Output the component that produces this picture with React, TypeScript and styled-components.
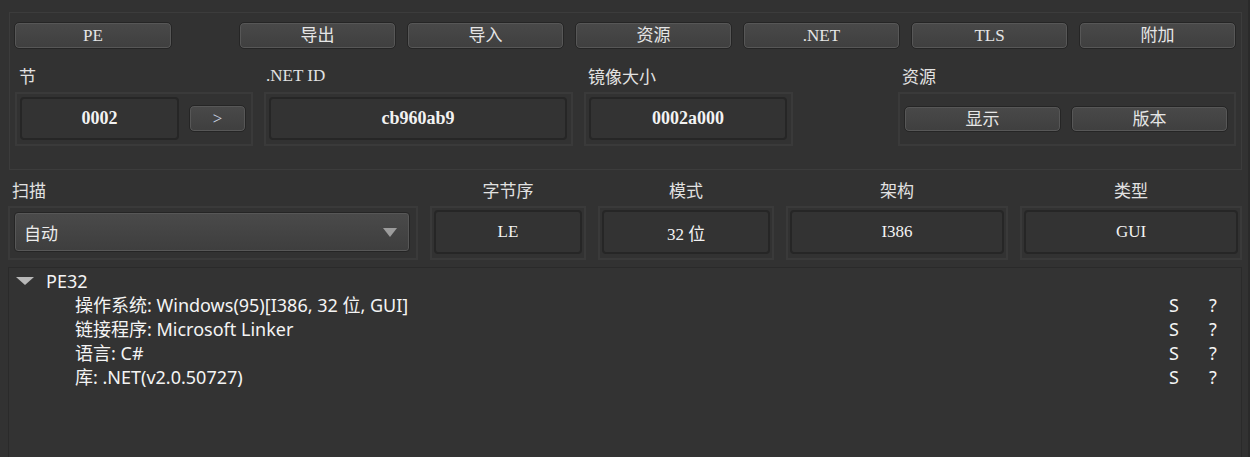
import React from 'react';
import styled, { createGlobalStyle } from 'styled-components';

const GlobalStyle = createGlobalStyle`
  html, body {
    margin: 0;
    padding: 0;
    background: #323232;
  }
  body {
    width: 1250px;
    height: 457px;
    overflow: hidden;
    font-family: "Noto Sans", "Noto Sans CJK SC", sans-serif;
    color: #ececec;
  }
`;

const serifFont = `"Liberation Serif", "Noto Sans CJK SC", serif`;

const Window = styled.div`
  height: 457px;
  box-sizing: border-box;
  padding: 12px 6px 0 8px;
  display: flex;
  flex-direction: column;
  border-right: 2px solid #2a2a2a;
`;

const GroupBox = styled.div`
  margin-left: 1px;
  border: 1px solid #3c3c3c;
  padding: 9px 5px 23px 4px;
`;

const ButtonRow = styled.div`
  display: grid;
  grid-template-columns: 158px 1fr repeat(6, 157px);
  column-gap: 11px;
`;

const Button = styled.button<{ $height?: number }>`
  height: ${({ $height }) => $height ?? 27}px;
  box-sizing: border-box;
  margin: 0;
  padding: 0;
  border: 1px solid #252525;
  border-radius: 5px;
  box-shadow: inset 0 0 0 1px #575757;
  background: linear-gradient(#494949, #3f3f3f);
  color: #e6e6e6;
  font-family: ${serifFont};
  font-size: 17px;
  line-height: 1;
  display: flex;
  align-items: center;
  justify-content: center;
`;

const FieldRow = styled.div`
  margin-top: 17px;
  padding-left: 1px;
  display: grid;
  grid-template-columns: 238px 309px 209px 1fr 338px;
  column-gap: 11px;
`;

const Field = styled.div`
  display: flex;
  flex-direction: column;
  gap: 6px;
`;

const Label = styled.label<{ $latin?: boolean; $center?: boolean }>`
  display: block;
  height: 20px;
  line-height: 20px;
  padding-left: ${({ $center, $latin }) => ($center ? 0 : $latin ? 2 : 4)}px;
  text-align: ${({ $center }) => ($center ? 'center' : 'left')};
  font-family: ${({ $latin }) => ($latin ? serifFont : `"Noto Sans CJK SC", sans-serif`)};
  font-size: 17px;
  color: #e2e2e2;
  white-space: nowrap;
`;

const Frame = styled.div<{ $pad?: string }>`
  height: 54px;
  box-sizing: border-box;
  border: 2px solid #3a3a3a;
  padding: ${({ $pad }) => $pad ?? '3px 4px 4px 3px'};
  display: flex;
  align-items: center;
  gap: 10px;
`;

const ValueBox = styled.div<{ $bold?: boolean }>`
  flex: 1;
  align-self: stretch;
  box-sizing: border-box;
  border: 2px solid #262626;
  border-radius: 4px;
  background: #333333;
  display: flex;
  align-items: center;
  justify-content: center;
  color: #f2f2f2;
  font-family: ${serifFont};
  font-weight: ${({ $bold }) => ($bold ? 700 : 400)};
  font-size: ${({ $bold }) => ($bold ? 18 : 17)}px;
`;

const ArrowButton = styled(Button)`
  width: 57px;
  flex: none;
  color: #cfd8e8;
`;

const ResourceButton = styled(Button)`
  flex: 1;
`;

const InfoRow = styled.div`
  margin-top: 10px;
  display: grid;
  grid-template-columns: 410px 156px 176px 222px 1fr;
  column-gap: 12px;
`;

const Combo = styled.div`
  flex: 1;
  align-self: stretch;
  box-sizing: border-box;
  border: 1px solid #252525;
  border-radius: 4px;
  box-shadow: inset 0 0 0 1px #575757;
  background: linear-gradient(#4a4a4a, #3e3e3e);
  display: flex;
  align-items: center;
  justify-content: space-between;
  padding: 0 12px 0 9px;
  font-family: "Noto Sans CJK SC", sans-serif;
  font-size: 17px;
  color: #ececec;
`;

const ComboArrow = styled.span`
  width: 0;
  height: 0;
  border-left: 7px solid transparent;
  border-right: 7px solid transparent;
  border-top: 9px solid #9c9c9c;
`;

const Tree = styled.div`
  flex: 1;
  margin-top: 7px;
  border: 1px solid #2a2a2a;
  border-bottom: none;
  background: #333333;
  padding-top: 1px;
`;

const TreeRow = styled.div<{ $indent: number }>`
  display: grid;
  grid-template-columns: 1fr 40px 32px;
  height: 24px;
  line-height: 24px;
  font-size: 18px;
  color: #f4f4f4;
  padding-left: ${({ $indent }) => $indent}px;
  white-space: nowrap;
`;

const TreeTitle = styled.span`
  display: flex;
  align-items: center;
`;

const Expander = styled.span`
  width: 0;
  height: 0;
  margin-right: 12px;
  border-left: 9px solid transparent;
  border-right: 9px solid transparent;
  border-top: 8px solid #b8b8b8;
`;

const Flag = styled.span``;

const topButtons = ['导出', '导入', '资源', '.NET', 'TLS', '附加'];

const details = [
  '操作系统: Windows(95)[I386, 32 位, GUI]',
  '链接程序: Microsoft Linker',
  '语言: C#',
  '库: .NET(v2.0.50727)',
];

const infoFields = [
  { label: '字节序', value: 'LE' },
  { label: '模式', value: '32 位' },
  { label: '架构', value: 'I386' },
  { label: '类型', value: 'GUI' },
];

export default function App() {
  return (
    <>
      <GlobalStyle />
      <Window>
        <GroupBox>
          <ButtonRow>
            <Button>PE</Button>
            <span />
            {topButtons.map((b) => (
              <Button key={b}>{b}</Button>
            ))}
          </ButtonRow>
          <FieldRow>
            <Field>
              <Label>节</Label>
              <Frame $pad="3px 5px 4px 3px">
                <ValueBox $bold>0002</ValueBox>
                <ArrowButton>&gt;</ArrowButton>
              </Frame>
            </Field>
            <Field>
              <Label $latin>.NET ID</Label>
              <Frame>
                <ValueBox $bold>cb960ab9</ValueBox>
              </Frame>
            </Field>
            <Field>
              <Label>镜像大小</Label>
              <Frame>
                <ValueBox $bold>0002a000</ValueBox>
              </Frame>
            </Field>
            <span />
            <Field>
              <Label>资源</Label>
              <Frame $pad="0 6px 0 4px">
                <ResourceButton $height={26}>显示</ResourceButton>
                <ResourceButton $height={26}>版本</ResourceButton>
              </Frame>
            </Field>
          </FieldRow>
        </GroupBox>

        <InfoRow>
          <Field>
            <Label>扫描</Label>
            <Frame $pad="4px 6px 6px 4px">
              <Combo>
                自动
                <ComboArrow />
              </Combo>
            </Frame>
          </Field>
          {infoFields.map((f) => (
            <Field key={f.label}>
              <Label $center>{f.label}</Label>
              <Frame $pad="2px 2px 4px 2px">
                <ValueBox>{f.value}</ValueBox>
              </Frame>
            </Field>
          ))}
        </InfoRow>

        <Tree>
          <TreeRow $indent={7}>
            <TreeTitle>
              <Expander />
              PE32
            </TreeTitle>
            <Flag />
            <Flag />
          </TreeRow>
          {details.map((d) => (
            <TreeRow key={d} $indent={66}>
              <span>{d}</span>
              <Flag>S</Flag>
              <Flag>?</Flag>
            </TreeRow>
          ))}
        </Tree>
      </Window>
    </>
  );
}
